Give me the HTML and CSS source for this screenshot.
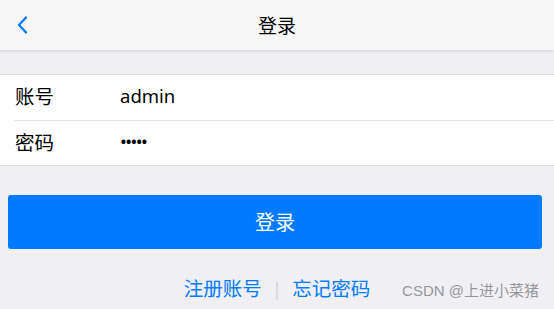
FILE: index.html
```html
<!DOCTYPE html>
<html lang="zh">
<head>
<meta charset="utf-8">
<link rel="stylesheet" href="styles.css">
</head>
<body>
<div class="page">
  <header class="bar">
    <span class="back">
      <svg width="12" height="18" viewBox="0 0 12 18"><path d="M10 1.5 L3 9 L10 16.5" fill="none" stroke="#007aff" stroke-width="2.2" stroke-linecap="round" stroke-linejoin="round"/></svg>
    </span>
    <h1 class="title">登录</h1>
  </header>
  <section class="form">
    <div class="row"><span class="label">账号</span><span class="value">admin</span></div>
    <div class="row"><span class="label">密码</span><span class="value dots">•••••</span></div>
  </section>
  <div class="btn-wrap"><button class="btn">登录</button></div>
  <div class="links">
    <a class="link">注册账号</a>
    <span class="sep">|</span>
    <a class="link">忘记密码</a>
  </div>
  <span class="mark">CSDN @上进小菜猪</span>
</div>
</body>
</html>
```
FILE: styles.css
```css
html, body { margin: 0; padding: 0; }
body {
  background: #efeff4;
  font-family: "Noto Sans CJK SC", "Noto Sans", sans-serif;
  width: 554px;
  height: 309px;
  overflow: hidden;
}
.page { position: relative; height: 309px; }
.bar {
  height: 50px;
  background: #f7f7f7;
  box-shadow: 0 1px 3px rgba(0,0,0,0.12);
  display: flex;
  align-items: center;
  justify-content: center;
  position: relative;
  padding-bottom: 2px;
  box-sizing: border-box;
}
.back {
  position: absolute;
  left: 16px;
  top: 16px;
  width: 12px;
  height: 18px;
}
.back svg { display: block; }
.title {
  margin: 0;
  font-size: 19px;
  font-weight: normal;
  color: #000;
  line-height: 1;
}
.form {
  margin-top: 24px;
  background: #fff;
  border-top: 1px solid #e0e0e0;
  border-bottom: 1px solid #e0e0e0;
  padding-left: 14px;
}
.row {
  height: 45px;
  display: flex;
  align-items: center;
  font-size: 19.5px;
  color: #000;
  padding-bottom: 4px;
  box-sizing: border-box;
}
.row + .row { border-top: 1px solid #e4e4e4; }
.label { width: 105px; padding-left: 1px; }
.value { font-family: "Noto Sans", sans-serif; font-size: 18.5px; }
.dots { font-size: 18px; letter-spacing: -1.5px; }
.btn-wrap { padding: 29px 12px 0 8px; }
.btn {
  display: block;
  width: 100%;
  height: 54px;
  border: none;
  border-radius: 3px;
  background: #007aff;
  color: #fff;
  font-family: "Noto Sans CJK SC", sans-serif;
  font-size: 20px;
  padding: 0 0 1px 0;
}
.links {
  margin-top: 26px;
  display: flex;
  justify-content: center;
  align-items: center;
  gap: 13px;
  font-size: 19.5px;
  line-height: 26px;
  padding-left: 0;
}
.link { color: #007aff; }
.sep { color: #ccc; font-size: 16px; }
.mark {
  position: absolute;
  right: 15px;
  bottom: 9px;
  font-family: "Liberation Sans", "Noto Sans CJK SC", sans-serif;
  font-size: 15px;
  color: rgba(120,120,120,0.75);
}
```
